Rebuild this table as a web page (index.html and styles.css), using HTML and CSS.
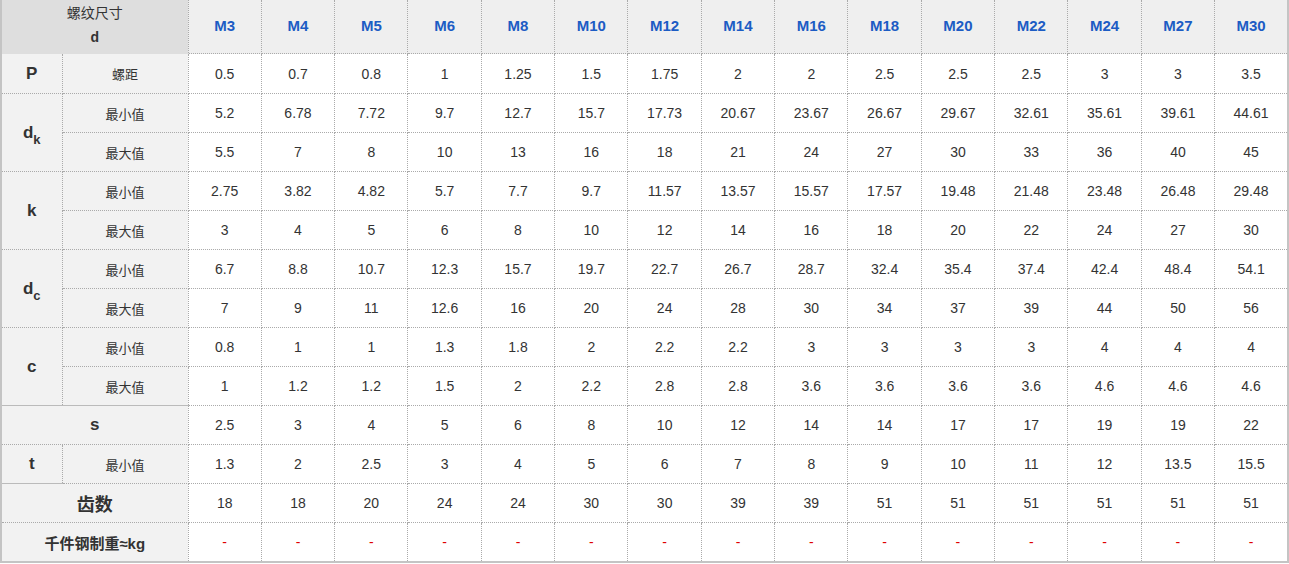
FILE: index.html
```html
<!DOCTYPE html>
<html lang="zh">
<head>
<meta charset="utf-8">
<link rel="stylesheet" href="styles.css">
</head>
<body>
<table class="spec">
<colgroup><col class="c-grp"><col class="c-sub"><col span="15"></colgroup>
<thead>
<tr class="head">
<th colspan="2" class="corner"><span class="cn">螺纹尺寸</span><br><b>d</b></th>
<th>M3</th><th>M4</th><th>M5</th><th>M6</th><th>M8</th><th>M10</th><th>M12</th><th>M14</th><th>M16</th><th>M18</th><th>M20</th><th>M22</th><th>M24</th><th>M27</th><th>M30</th>
</tr>
</thead>
<tbody>
<tr class="first"><th class="grp">P</th><td class="sub">螺距</td><td>0.5</td><td>0.7</td><td>0.8</td><td>1</td><td>1.25</td><td>1.5</td><td>1.75</td><td>2</td><td>2</td><td>2.5</td><td>2.5</td><td>2.5</td><td>3</td><td>3</td><td>3.5</td></tr>
<tr><th class="grp" rowspan="2">d<sub>k</sub></th><td class="sub">最小值</td><td>5.2</td><td>6.78</td><td>7.72</td><td>9.7</td><td>12.7</td><td>15.7</td><td>17.73</td><td>20.67</td><td>23.67</td><td>26.67</td><td>29.67</td><td>32.61</td><td>35.61</td><td>39.61</td><td>44.61</td></tr>
<tr><td class="sub">最大值</td><td>5.5</td><td>7</td><td>8</td><td>10</td><td>13</td><td>16</td><td>18</td><td>21</td><td>24</td><td>27</td><td>30</td><td>33</td><td>36</td><td>40</td><td>45</td></tr>
<tr><th class="grp" rowspan="2">k</th><td class="sub">最小值</td><td>2.75</td><td>3.82</td><td>4.82</td><td>5.7</td><td>7.7</td><td>9.7</td><td>11.57</td><td>13.57</td><td>15.57</td><td>17.57</td><td>19.48</td><td>21.48</td><td>23.48</td><td>26.48</td><td>29.48</td></tr>
<tr><td class="sub">最大值</td><td>3</td><td>4</td><td>5</td><td>6</td><td>8</td><td>10</td><td>12</td><td>14</td><td>16</td><td>18</td><td>20</td><td>22</td><td>24</td><td>27</td><td>30</td></tr>
<tr><th class="grp" rowspan="2">d<sub>c</sub></th><td class="sub">最小值</td><td>6.7</td><td>8.8</td><td>10.7</td><td>12.3</td><td>15.7</td><td>19.7</td><td>22.7</td><td>26.7</td><td>28.7</td><td>32.4</td><td>35.4</td><td>37.4</td><td>42.4</td><td>48.4</td><td>54.1</td></tr>
<tr><td class="sub">最大值</td><td>7</td><td>9</td><td>11</td><td>12.6</td><td>16</td><td>20</td><td>24</td><td>28</td><td>30</td><td>34</td><td>37</td><td>39</td><td>44</td><td>50</td><td>56</td></tr>
<tr><th class="grp solid-b" rowspan="2">c</th><td class="sub">最小值</td><td>0.8</td><td>1</td><td>1</td><td>1.3</td><td>1.8</td><td>2</td><td>2.2</td><td>2.2</td><td>3</td><td>3</td><td>3</td><td>3</td><td>4</td><td>4</td><td>4</td></tr>
<tr><td class="sub solid-b">最大值</td><td>1</td><td>1.2</td><td>1.2</td><td>1.5</td><td>2</td><td>2.2</td><td>2.8</td><td>2.8</td><td>3.6</td><td>3.6</td><td>3.6</td><td>3.6</td><td>4.6</td><td>4.6</td><td>4.6</td></tr>
<tr><th class="grp" colspan="2">s</th><td>2.5</td><td>3</td><td>4</td><td>5</td><td>6</td><td>8</td><td>10</td><td>12</td><td>14</td><td>14</td><td>17</td><td>17</td><td>19</td><td>19</td><td>22</td></tr>
<tr><th class="grp solid-b">t</th><td class="sub">最小值</td><td>1.3</td><td>2</td><td>2.5</td><td>3</td><td>4</td><td>5</td><td>6</td><td>7</td><td>8</td><td>9</td><td>10</td><td>11</td><td>12</td><td>13.5</td><td>15.5</td></tr>
<tr><th class="grp big" colspan="2">齿数</th><td>18</td><td>18</td><td>20</td><td>24</td><td>24</td><td>30</td><td>30</td><td>39</td><td>39</td><td>51</td><td>51</td><td>51</td><td>51</td><td>51</td><td>51</td></tr>
<tr class="last"><th class="grp small" colspan="2">千件钢制重≈kg</th><td class="dash">-</td><td class="dash">-</td><td class="dash">-</td><td class="dash">-</td><td class="dash">-</td><td class="dash">-</td><td class="dash">-</td><td class="dash">-</td><td class="dash">-</td><td class="dash">-</td><td class="dash">-</td><td class="dash">-</td><td class="dash">-</td><td class="dash">-</td><td class="dash">-</td></tr>
</tbody>
</table>
</body>
</html>
```
FILE: styles.css
```css
html, body {
  margin: 0;
  padding: 0;
  background: #fff;
}

.spec {
  width: 1289px;
  table-layout: fixed;
  border-collapse: collapse;
  font-family: "Liberation Sans", Arial, "Noto Sans CJK SC", sans-serif;
  font-size: 14px;
  color: #333;
  border-left: 2px solid #c4c4c4;
  border-right: 2px solid #c4c4c4;
  border-bottom: 2px solid #c4c4c4;
}

.c-grp { width: 61px; }
.c-sub { width: 126px; }

.spec th,
.spec td {
  border: 1px dotted #aaa;
  text-align: center;
  vertical-align: middle;
  padding: 0;
  height: 38px;
}

.head th {
  height: 49px;
  background: #efefef;
  color: #1c5cc4;
  font-weight: bold;
  font-size: 15px;
  border-top: none;
  border-bottom: 1px dotted #aaa;
  padding: 0 0 3px 0;
}

.head .corner {
  background: #dedede;
  color: #333;
  font-weight: normal;
  font-size: 14px;
  line-height: 24px;
  border: none;
  border-bottom: 1px solid #dedede;
  padding: 0 0 4px 0;
}

.corner .cn {
  font-family: "Liberation Sans", "Noto Sans CJK SC", sans-serif;
}

.corner b {
  font-weight: bold;
}

.first th,
.first td {
  height: 39px;
}

.grp {
  background: #f2f2f2;
  font-weight: bold;
  font-size: 17px;
  color: #333;
}

.grp sub {
  font-size: 13px;
  vertical-align: -6px;
  line-height: 0;
}

.grp.big {
  font-size: 18px;
}

.grp.small {
  font-size: 15px;
}

.sub {
  background: #f2f2f2;
  font-size: 13px;
  color: #333;
  font-family: "Liberation Sans", "Noto Sans CJK SC", sans-serif;
}

.solid-b {
  border-bottom: 1px solid #bbb !important;
}

.last th,
.last td {
  height: 38px;
}

.spec .dash {
  color: #e00000;
  font-size: 14px;
}
```
